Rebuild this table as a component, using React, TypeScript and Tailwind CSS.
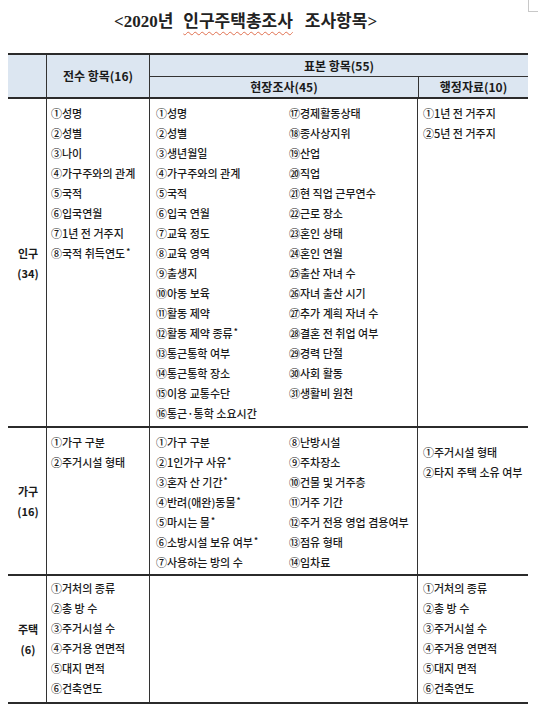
import React from "react";

const KR = "font-['Noto_Sans_CJK_KR','Noto_Sans',sans-serif]";

type Block = {
  label: string;
  count: string;
  full: string[];
  fieldA: string[];
  fieldB: string[];
  admin: string[];
  height: string;
  pad: string;
  adminPad: string;
};

const blocks: Block[] = [
  {
    label: "인구",
    count: "(34)",
    full: ["①성명", "②성별", "③나이", "④가구주와의 관계", "⑤국적", "⑥입국연월", "⑦1년 전 거주지", "⑧국적 취득연도*"],
    fieldA: [
      "①성명",
      "②성별",
      "③생년월일",
      "④가구주와의 관계",
      "⑤국적",
      "⑥입국 연월",
      "⑦교육 정도",
      "⑧교육 영역",
      "⑨출생지",
      "⑩아동 보육",
      "⑪활동 제약",
      "⑫활동 제약 종류*",
      "⑬통근통학 여부",
      "⑭통근통학 장소",
      "⑮이용 교통수단",
      "⑯통근·통학 소요시간",
    ],
    fieldB: [
      "⑰경제활동상태",
      "⑱종사상지위",
      "⑲산업",
      "⑳직업",
      "㉑현 직업 근무연수",
      "㉒근로 장소",
      "㉓혼인 상태",
      "㉔혼인 연월",
      "㉕출산 자녀 수",
      "㉖자녀 출산 시기",
      "㉗추가 계획 자녀 수",
      "㉘결혼 전 취업 여부",
      "㉙경력 단절",
      "㉚사회 활동",
      "㉛생활비 원천",
    ],
    admin: ["①1년 전 거주지", "②5년 전 거주지"],
    height: "h-[327px]",
    pad: "pt-[4px]",
    adminPad: "pt-[4px]",
  },
  {
    label: "가구",
    count: "(16)",
    full: ["①가구 구분", "②주거시설 형태"],
    fieldA: [
      "①가구 구분",
      "②1인가구 사유*",
      "③혼자 산 기간*",
      "④반려(애완)동물*",
      "⑤마시는 물*",
      "⑥소방시설 보유 여부*",
      "⑦사용하는 방의 수",
    ],
    fieldB: [
      "⑧난방시설",
      "⑨주차장소",
      "⑩건물 및 거주층",
      "⑪거주 기간",
      "⑫주거 전용 영업 겸용여부",
      "⑬점유 형태",
      "⑭임차료",
    ],
    admin: ["①주거시설 형태", "②타지 주택 소유 여부"],
    height: "h-[146px]",
    pad: "pt-[4px]",
    adminPad: "pt-[14px]",
  },
  {
    label: "주택",
    count: "(6)",
    full: ["①거처의 종류", "②총 방 수", "③주거시설 수", "④주거용 연면적", "⑤대지 면적", "⑥건축연도"],
    fieldA: [],
    fieldB: [],
    admin: ["①거처의 종류", "②총 방 수", "③주거시설 수", "④주거용 연면적", "⑤대지 면적", "⑥건축연도"],
    height: "h-[126px]",
    pad: "pt-[2px]",
    adminPad: "pt-[2px]",
  },
];

const Item = ({ text }: { text: string }) => {
  const star = text.endsWith("*");
  const body = star ? text.slice(0, -1) : text;
  return (
    <div className="h-[20px] leading-[20px] whitespace-nowrap">
      {body}
      {star && <span className="relative -top-[4px] ml-[1px] text-[8px] font-bold">*</span>}
    </div>
  );
};

const List = ({ items, className }: { items: string[]; className: string }) => (
  <div className={className}>
    {items.map((t, i) => (
      <Item key={i} text={t} />
    ))}
  </div>
);

export default function App() {
  return (
    <div className={`relative w-[538px] h-[712px] bg-white text-[#1a1a1a] ${KR}`}>
      {/* page corner mark */}
      <div className="absolute right-0 top-0 w-[10px] h-[12px] border-l border-b border-[#c8c8c8]" />

      <div className="h-[53px] pl-[114px] pt-[7px]">
        <div className="text-[17px] leading-[26px] font-bold whitespace-nowrap text-[#222]">
          <span className="font-['Liberation_Serif','Noto_Sans_CJK_KR',serif]">&lt;2020</span>
          <span>년</span>
          <span className="ml-[10px] underline decoration-wavy decoration-[#e0704f] decoration-1 underline-offset-[4px]">
            인구주택총조사
          </span>
          <span className="ml-[12px]">조사항목</span>
          <span className="font-['Liberation_Serif',serif]">&gt;</span>
        </div>
      </div>

      <div className="ml-[8px] w-[520px] text-[11px] font-medium">
        {/* header */}
        <div className="flex h-[44px] border-t-2 border-[#2b2b2b] bg-[#dce6f1] font-bold text-[12px]">
          <div className="w-[38px]" />
          <div className="w-[103px] border-l border-[#333] flex items-center justify-center">
            전수 항목(16)
          </div>
          <div className="flex-1 border-l border-[#333] flex flex-col">
            <div className="h-[22px] border-b border-[#333] flex items-center justify-center">
              표본 항목(55)
            </div>
            <div className="flex flex-1">
              <div className="w-[268px] flex items-center justify-center">현장조사(45)</div>
              <div className="flex-1 border-l border-[#333] flex items-center justify-center">
                행정자료(10)
              </div>
            </div>
          </div>
        </div>

        {blocks.map((b, i) => (
          <div
            key={b.label}
            className={`flex ${b.height} border-t-2 border-[#2b2b2b] box-content ${
              i === blocks.length - 1 ? "border-b-2" : ""
            }`}
          >
            <div className="w-[38px] flex flex-col items-center justify-center font-bold text-[11px] leading-[20px] pl-[2px]">
              <div>{b.label}</div>
              <div>{b.count}</div>
            </div>
            <List items={b.full} className={`w-[103px] border-l border-[#333] pl-[4px] ${b.pad}`} />
            <div className={`w-[268px] border-l border-[#333] flex ${b.pad}`}>
              <List items={b.fieldA} className="w-[139px] pl-[6px]" />
              <List items={b.fieldB} className="flex-1" />
            </div>
            <List items={b.admin} className={`flex-1 border-l border-[#333] pl-[5px] ${b.adminPad}`} />
          </div>
        ))}
      </div>
    </div>
  );
}
